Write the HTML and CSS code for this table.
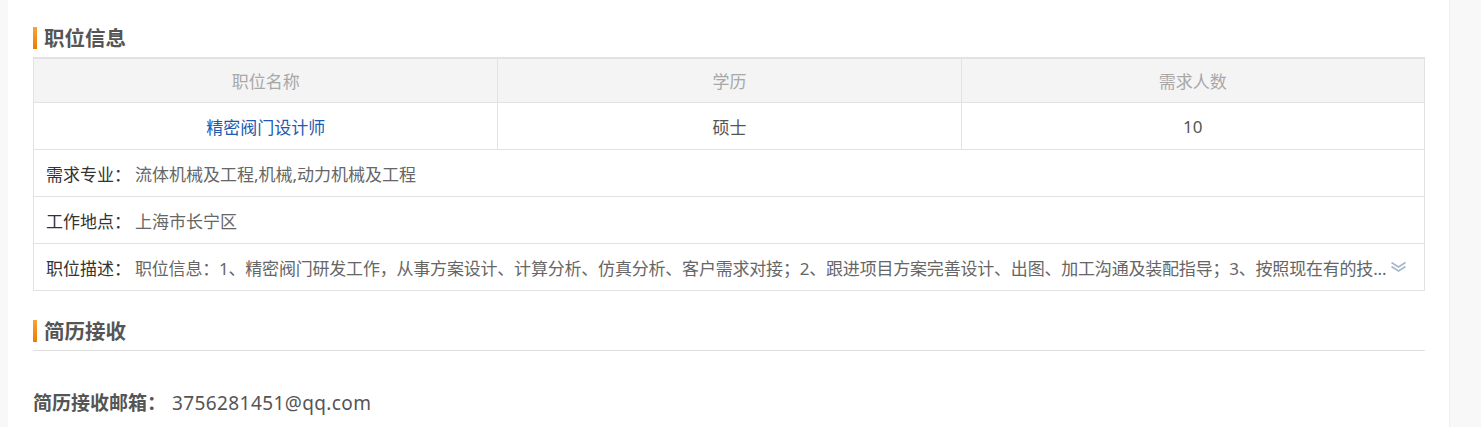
FILE: index.html
```html
<!DOCTYPE html>
<html lang="zh-CN">
<head>
  <meta charset="UTF-8">
  <title>职位信息</title>
  <link rel="stylesheet" href="styles.css">
</head>
<body>
<div class="page">
  <h3 class="title">职位信息</h3>
  <div class="jobs">
    <div class="jobs-head">
      <div class="cell">职位名称</div>
      <div class="cell">学历</div>
      <div class="cell">需求人数</div>
    </div>
    <div class="jobs-row">
      <div class="cell"><a href="#" class="job-link">精密阀门设计师</a></div>
      <div class="cell">硕士</div>
      <div class="cell">10</div>
    </div>
    <div class="info-row">
      <span class="info-label">需求专业：</span>
      <span class="info-value">流体机械及工程,机械,动力机械及工程</span>
    </div>
    <div class="info-row">
      <span class="info-label">工作地点：</span>
      <span class="info-value">上海市长宁区</span>
    </div>
    <div class="info-row">
      <span class="info-label">职位描述：</span>
      <span class="info-value clip">职位信息：1、精密阀门研发工作，从事方案设计、计算分析、仿真分析、客户需求对接；2、跟进项目方案完善设计、出图、加工沟通及装配指导；3、按照现在有的技...</span>
      <svg class="more" width="17" height="12" viewBox="0 0 17 12">
        <polyline points="1.5,1.5 8.5,6 15.5,1.5" fill="none" stroke="#a7b6c9" stroke-width="1.6"/>
        <polyline points="1.5,5.5 8.5,10 15.5,5.5" fill="none" stroke="#a7b6c9" stroke-width="1.6"/>
      </svg>
    </div>
  </div>

  <h3 class="title title-line">简历接收</h3>
  <p class="mail"><strong>简历接收邮箱：</strong><span class="mail-addr">3756281451@qq.com</span></p>
</div>
</body>
</html>
```

FILE: styles.css
```css
body {
  margin: 0;
  background: #f8f8f8;
  font-family: "Noto Sans", "Noto Sans CJK SC", sans-serif;
  color: #555;
}
.page {
  margin-left: 8px;
  width: 1392px;
  min-height: 400px;
  padding: 27px 24px 0 25px;
  background: #fff;
  border-right: 1px solid #f0f0f0;
}
.title {
  display: flex;
  align-items: center;
  margin: 0;
  height: 22px;
  line-height: 22px;
  font-size: 20.5px;
  font-weight: bold;
  color: #555;
}
.title::before {
  content: "";
  width: 4px;
  height: 22px;
  margin-right: 7px;
  background: linear-gradient(#f7a23b, #ee7d00);
}
.jobs {
  margin-top: 8px;
  border: 1px solid #e2e2e2;
  border-top: 2px solid #e2e2e2;
  font-size: 17px;
}
.jobs-head, .jobs-row {
  display: grid;
  grid-template-columns: repeat(3, 1fr);
}
.jobs-head {
  height: 43px;
  background: #f4f4f4;
  color: #a8a8a8;
  border-bottom: 1px solid #e2e2e2;
}
.jobs-row {
  height: 46px;
  border-bottom: 1px solid #e2e2e2;
}
.cell {
  display: flex;
  align-items: center;
  justify-content: center;
}
.cell + .cell {
  border-left: 1px solid #e2e2e2;
}
.job-link {
  color: #1f5ab0;
  text-decoration: none;
}
.info-row {
  display: flex;
  align-items: center;
  height: 46px;
  padding: 0 17px 0 12px;
}
.info-row + .info-row {
  border-top: 1px solid #e2e2e2;
}
.info-label {
  flex: none;
  width: 89px;
  color: #333;
}
.info-value {
  color: #666;
}
.clip {
  flex: 1;
  min-width: 0;
  white-space: nowrap;
  overflow: hidden;
  letter-spacing: -0.2px;
}
.more {
  flex: none;
  margin-left: 3px;
}
.title-line {
  margin-top: 29px;
  height: 22px;
  padding-bottom: 8px;
  border-bottom: 1px solid #dedede;
}
.mail {
  margin: 39px 0 0;
  font-size: 19px;
  line-height: 26px;
  color: #555;
}
.mail strong {
  margin-right: 6px;
}
.mail-addr {
  letter-spacing: 0.4px;
}
```
